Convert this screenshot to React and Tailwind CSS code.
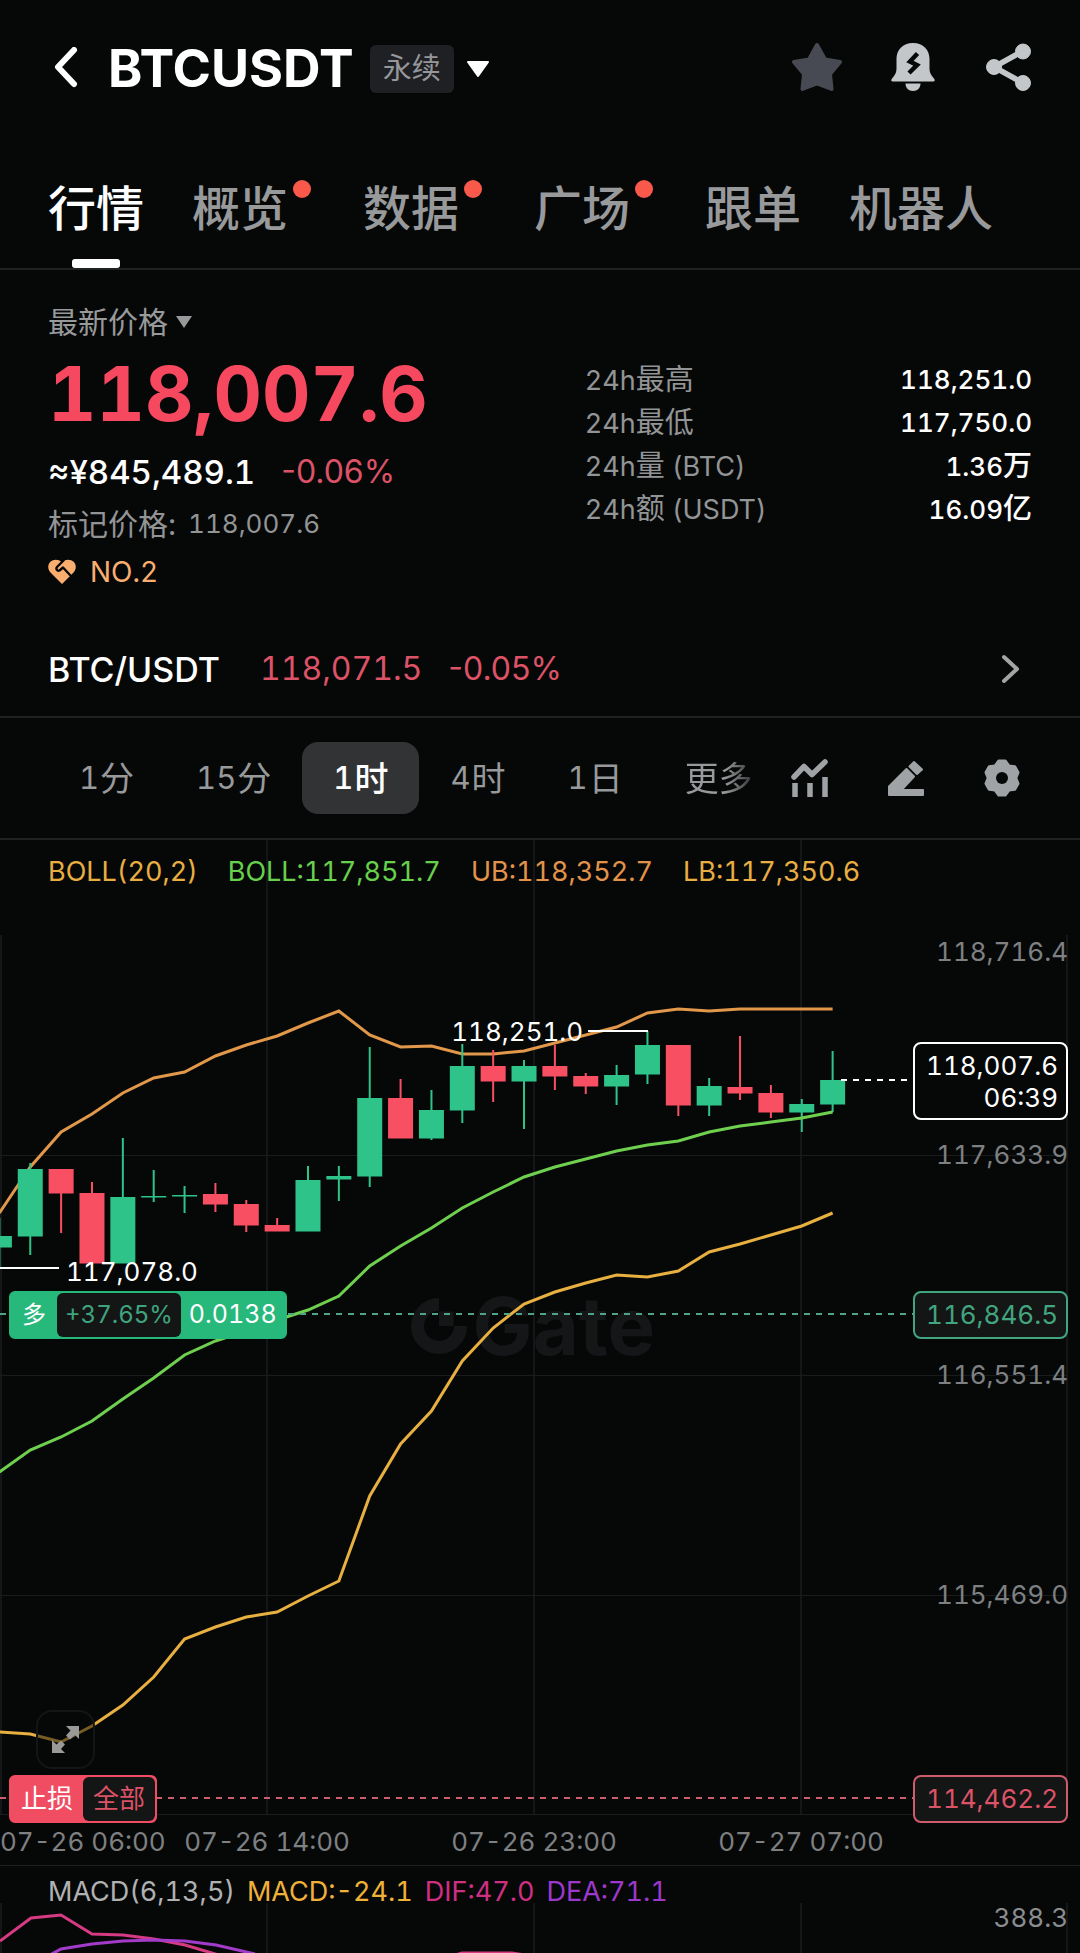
import React, { useState } from 'react';

const TABS = [
  { name: '行情' },
  { name: '概览', dot: true },
  { name: '数据', dot: true },
  { name: '广场', dot: true },
  { name: '跟单' },
  { name: '机器人' },
];

const STATS = [
  { en: '24h', zh: '最高', value: '118,251.0' },
  { en: '24h', zh: '最低', value: '117,750.0' },
  { en: '24h', zh: '量', unit: ' (BTC)', value: '1.36', valueZh: '万' },
  { en: '24h', zh: '额', unit: ' (USDT)', value: '16.09', valueZh: '亿' },
];

const PERIODS = [
  { num: '1', zh: '分' },
  { num: '15', zh: '分' },
  { num: '1', zh: '时' },
  { num: '4', zh: '时' },
  { num: '1', zh: '日' },
  { num: '', zh: '更多' },
];

// [up, high, bodyTop, bodyBottom, low] in chart units
const CANDLES = [
  [1, 378, 396, 407, 428],
  [1, 323, 329, 396, 415],
  [0, 329, 329, 353, 393],
  [0, 342, 353, 423, 423],
  [1, 298, 357, 423, 423],
  [1, 330, 356, 357, 362],
  [1, 346, 355, 356, 373],
  [0, 343, 354, 364, 372],
  [0, 360, 364, 385, 392],
  [0, 378, 385, 391, 391],
  [1, 326, 340, 391, 391],
  [1, 326, 336, 339, 361],
  [1, 207, 258, 336, 347],
  [0, 239, 258, 298, 298],
  [1, 250, 270, 298, 300],
  [1, 204, 226, 270, 283],
  [0, 210, 226, 241, 262],
  [1, 220, 226, 241, 289],
  [0, 205, 226, 236, 250],
  [0, 233, 236, 246, 254],
  [1, 225, 235, 246, 265],
  [1, 191, 205, 234, 244],
  [0, 205, 205, 265, 276],
  [1, 238, 246, 265, 276],
  [0, 196, 247, 253, 260],
  [0, 245, 253, 272, 278],
  [1, 259, 264, 272, 292],
  [1, 211, 240, 264, 272],
];

const UPPER = [373, 327, 292, 274, 253, 238, 232, 216, 205, 196, 183, 171, 195, 207, 206, 214, 214, 211, 203, 195, 187, 173, 169, 171, 169, 169, 169, 169];
const MIDDLE = [632, 610, 597, 581, 559, 538, 515, 501, 491, 480, 470, 456, 426, 406, 388, 368, 352, 337, 327, 319, 311, 305, 301, 292, 286, 282, 278, 272];
const LOWER = [892, 894, 902, 886, 865, 837, 799, 787, 777, 772, 756, 741, 656, 604, 571, 521, 488, 464, 452, 443, 435, 437, 431, 412, 404, 395, 386, 373];

const candleX = (i) => i * 30.86 - 0.6;
const toPoints = (values) => values.map((v, i) => `${candleX(i)},${v}`).join(' ');

const GRID_X = [1, 267, 534, 801, 1067];

const DATES = [
  { label: '07-26 14:00', x: 267 },
  { label: '07-26 23:00', x: 534 },
  { label: '07-27 07:00', x: 801 },
];

const Zh = ({ className = 'text-[29px]', children }) => <span className={className}>{children}</span>;

const Header = () => (
  <header className="flex h-[138px] items-center justify-between px-12">
    <div className="flex items-center">
      <button aria-label="返回" className="pl-1">
        <svg width="30" height="44" viewBox="0 0 30 44" fill="none" stroke="#fff" strokeWidth="6" strokeLinecap="round" strokeLinejoin="round">
          <path d="M22 3 6 20 22 37" />
        </svg>
      </button>
      <h1 className="ml-[26px] text-[52px] font-bold leading-[56px] text-white">BTCUSDT</h1>
      <span className="ml-4 rounded-md bg-[#1f2024] px-[13px] text-[29px] leading-[48px] text-[#96979a]">永续</span>
      <button aria-label="切换合约" className="ml-3">
        <svg width="24" height="18" viewBox="0 0 24 18" fill="#fff" stroke="#fff" strokeWidth="2" strokeLinejoin="round">
          <path d="M2 2h20L12 16z" />
        </svg>
      </button>
    </div>
    <div className="flex items-center gap-12 pb-1">
      <button aria-label="收藏">
        <svg width="50" height="50" viewBox="0 0 50 50" fill="#484a53" stroke="#484a53" strokeWidth="4" strokeLinejoin="round">
          <path d="M25 3 33 17.500 48 20 38 32 39.500 47 25 41.500 10.500 47 12 32 2 20 17 17.500z" />
        </svg>
      </button>
      <button aria-label="提醒">
        <svg width="46" height="50" viewBox="0 0 46 50">
          <path fill="#c4c7c9" d="M23 1C12.500 1 6.500 8 6.500 17v10c0 4-2 6.500-4.800 10-.9 1.300-.3 2.500 1 2.500h40.600c1.300 0 1.900-1.200 1-2.500-2.800-3.500-4.800-6-4.800-10V17C39.500 8 33.500 1 23 1z" />
          <path fill="#c4c7c9" d="M15.500 41.500h15c0 4.500-3 7.500-7.500 7.500s-7.500-3-7.500-7.500z" />
          <path fill="none" stroke="#060808" strokeWidth="4.500" d="M27.500 11.500 20 19.500 27 23 19 31" />
        </svg>
      </button>
      <button aria-label="分享">
        <svg width="48" height="50" viewBox="0 0 48 50" fill="#c4c7c9" stroke="#c4c7c9">
          <path d="M39 9 10 25 39 41" fill="none" strokeWidth="5.500" />
          <circle cx="39" cy="9.500" r="7.500" strokeWidth="1" />
          <circle cx="10" cy="25" r="7.500" strokeWidth="1" />
          <circle cx="39" cy="41" r="7.500" strokeWidth="1" />
        </svg>
      </button>
    </div>
  </header>
);

const Tabs = () => {
  const [active, setActive] = useState('行情');

  return (
    <nav className="flex gap-12 border-b-2 border-[#1f2122] px-12">
      {TABS.map((tab) => (
        <button key={tab.name} onClick={() => setActive(tab.name)} className="flex h-[130px] pt-[47px]">
          <span className="flex flex-col items-center">
            <span className={`text-[48px] font-medium leading-[48px] ${active === tab.name ? 'text-white' : 'text-[#98999b]'}`}>
              {tab.name}
            </span>
            {active === tab.name && <span className="mt-[26px] h-[9px] w-12 rounded-[3px] bg-white" />}
          </span>
          {tab.dot && <span className="-mt-[5px] ml-[5px] mr-1 h-[18px] w-[18px] rounded-full bg-[#f8594b]" />}
        </button>
      ))}
    </nav>
  );
};

const Ticker = () => (
  <section className="border-b-2 border-[#1f2122] px-12">
    <div className="grid grid-cols-[6fr_5fr]">
      <div>
        <button className="mt-8 flex items-center gap-2 text-[30px] leading-[40px] text-[#98999b]">
          最新价格
          <svg width="16" height="12" viewBox="0 0 16 12" fill="#98999b">
            <path d="M0 0h16L8 12z" />
          </svg>
        </button>
        <p className="mt-3 text-[75px] font-bold leading-[80px] text-[#f6495f]">118,007.6</p>
        <p className="mt-4 flex gap-[26px] text-[33px] font-medium leading-[44px] text-white">
          <span>≈¥845,489.1</span>
          <span className="text-[32px] font-normal normal-nums text-[#dc5266]">-0.06%</span>
        </p>
        <p className="mt-[10px] flex gap-3 text-[26px] leading-[40px] text-[#929496]">
          <Zh className="text-[30px]">标记价格:</Zh>
          <span>118,007.6</span>
        </p>
        <p className="mt-3 flex items-center gap-[14px] text-[28px] leading-[32px] text-[#f9ae70]">
          <svg width="28" height="26" viewBox="0 0 28 26">
            <path fill="#f9ae70" d="M14 25 2.500 13.500C-.6 10-.3 5.500 2.200 3 5.500-.2 10.500.2 14 3.200 17.500.2 22.500-.2 25.800 3c2.500 2.500 2.800 7-.3 10.500z" />
            <path fill="none" stroke="#060808" strokeWidth="2.400" strokeLinecap="round" strokeLinejoin="round" d="M15.500 1.500 9 8c-1.500 2 .3 4.500 2.500 3.500L15 8.500l7 7.500" />
          </svg>
          NO.2
        </p>
      </div>
      <dl className="pt-[88px] text-[26px] leading-[43px]">
        {STATS.map((row) => (
          <div key={row.zh} className="flex h-[43px] justify-between">
            <dt className="text-[27px] text-[#929496]">
              {row.en}
              <Zh>{row.zh}</Zh>
              {row.unit}
            </dt>
            <dd className="font-medium text-white">
              {row.value}
              {row.valueZh && <Zh>{row.valueZh}</Zh>}
            </dd>
          </div>
        ))}
      </dl>
    </div>
    <a href="#spot" className="mt-[34px] flex h-[94px] items-center text-[32px]">
      <span className="text-[34px] font-medium text-white">BTC/USDT</span>
      <span className="ml-10 text-[#dc5266]">118,071.5</span>
      <span className="ml-[26px] normal-nums text-[#dc5266]">-0.05%</span>
      <svg className="ml-auto mr-2" width="24" height="32" viewBox="0 0 24 32" fill="none" stroke="#a3a4a5" strokeWidth="4" strokeLinecap="round" strokeLinejoin="round">
        <path d="M4 4 17 16 4 28" />
      </svg>
    </a>
  </section>
);

const Toolbar = () => {
  const [period, setPeriod] = useState(2);

  return (
    <div className="flex h-[122px] items-center border-b-2 border-[#1f2122] pl-12 pr-[58px]">
      <div className="flex flex-1 overflow-hidden">
        {PERIODS.map((p, i) => (
          <button
            key={p.num + p.zh}
            onClick={() => setPeriod(i)}
            className={`flex h-[72px] shrink-0 items-center gap-px rounded-2xl px-[31px] text-[31px] ${
              period === i ? 'bg-[#323335] font-medium text-white' : 'text-[#98999b]'
            } ${i === 5 ? 'bg-gradient-to-r from-[#98999b] from-55% to-[#3a3b3c] to-75% bg-clip-text text-transparent' : ''}`}
          >
            {p.num}
            <Zh className="text-[34px]">{p.zh}</Zh>
          </button>
        ))}
      </div>
      <div className="flex shrink-0 gap-14">
        <button aria-label="指标">
          <svg width="40" height="40" viewBox="0 0 40 40" fill="none" stroke="#a0a3a6" strokeLinecap="round" strokeLinejoin="round">
            <path strokeWidth="5.500" d="M4 19 14 8.500 22 16.500 35 4" />
            <path strokeWidth="5.500" strokeLinecap="butt" d="M5 25v14M20 25v14M35 19v20" />
          </svg>
        </button>
        <button aria-label="画线">
          <svg width="40" height="40" viewBox="0 0 40 40" fill="#a0a3a6" stroke="#a0a3a6" strokeWidth="2" strokeLinejoin="round">
            <path d="M3 37V28.500L20.500 11 28 18.500 15.500 32H37v5z" />
            <path d="M23.500 8.500 28 4 36 11.500 31 16z" />
          </svg>
        </button>
        <button aria-label="设置">
          <svg width="40" height="40" viewBox="0 0 40 40">
            <path
              fill="#a0a3a6"
              stroke="#a0a3a6"
              strokeWidth="3"
              strokeLinejoin="round"
              d="M16.800 3h6.400l3.700 5 5.900.8 3.200 5.700-2.200 5.500 2.200 5.500-3.200 5.700-5.900.8-3.700 5h-6.400l-3.700-5-5.900-.8L4 25.500 6.200 20 4 14.500l3.200-5.700 5.900-.8z"
            />
            <circle cx="20" cy="20" r="6" fill="#060808" />
          </svg>
        </button>
      </div>
    </div>
  );
};

const Watermark = () => (
  <div className="absolute left-[38%] top-[448px] flex items-center gap-1 text-[#141617]">
    <svg width="58" height="58" viewBox="0 0 58 58">
      <path fill="none" stroke="currentColor" strokeWidth="13" d="M29 7.500A21.500 21.500 0 1 0 50.500 29" />
      <path fill="currentColor" d="M29 14.500h14.500V29H29z" />
    </svg>
    <span className="text-[80px] font-bold leading-[76px]">Gate</span>
  </div>
);

const PriceChart = () => (
  <section className="relative h-[975px]">
    <Watermark />
    <svg className="absolute inset-0 h-full w-full" viewBox="0 0 1080 975" preserveAspectRatio="none" fill="none">
      <g stroke="#141617" strokeWidth="2">
        {GRID_X.map((x, i) => (
          <path key={x} d={`M${x} ${i === 0 || i === 4 ? 95 : 0}V975`} />
        ))}
        <path d="M0 315.500H1067M0 535.500H1067M0 755.500H1067M0 974.500H1067" stroke="#191b1c" strokeWidth="1" />
      </g>
      <polyline points={toPoints(UPPER)} stroke="#e2984a" strokeWidth="3" />
      {CANDLES.map(([up, high, top, bottom, low], i) => (
        <g key={i} fill={up ? '#2dc389' : '#f84f63'}>
          <rect x={candleX(i) - 1} y={high} width="2" height={low - high} />
          <rect x={candleX(i) - 12.5} y={top} width="25" height={bottom - top + 0.5} />
        </g>
      ))}
      <polyline points={toPoints(MIDDLE)} stroke="#6fd04f" strokeWidth="3" />
      <polyline points={toPoints(LOWER)} stroke="#e8b040" strokeWidth="3" />
      <path d="M588 191H648M0 428H59" stroke="#fff" strokeWidth="2" />
      <path d="M841 240H914" stroke="#fff" strokeWidth="2" strokeDasharray="6 6" />
      <path d="M0 474H914" stroke="#4fa487" strokeWidth="2" strokeDasharray="6 6" />
      <path d="M0 958H914" stroke="#cf5c6c" strokeWidth="2" strokeDasharray="6 6" />
    </svg>

    <div className="relative flex gap-[30px] px-12 pt-3 text-[27px] leading-[40px]">
      <span className="text-[#e9ae42]">BOLL(20,2)</span>
      <span className="text-[#67d04c]">BOLL:117,851.7</span>
      <span className="text-[#e3924a]">UB:118,352.7</span>
      <span className="text-[#e9ae42]">LB:117,350.6</span>
    </div>

    <div className="text-[26px] leading-[32px]">
      <div className="text-[#7e8082]">
        <span className="absolute right-3 top-[96px]">118,716.4</span>
        <span className="absolute right-3 top-[299px]">117,633.9</span>
        <span className="absolute right-3 top-[519px]">116,551.4</span>
        <span className="absolute right-3 top-[739px]">115,469.0</span>
      </div>
      <div className="text-white">
        <span className="absolute right-[46%] top-[176px]">118,251.0</span>
        <span className="absolute left-[66px] top-[416px]">117,078.0</span>
      </div>

      <div className="absolute right-3 top-[202px] rounded-lg border-2 border-white bg-[#060808] pb-1 pl-[11px] pr-2 pt-[6px] text-right text-white">
        <p>118,007.6</p>
        <p>06:39</p>
      </div>
      <div className="absolute right-3 top-[451px] rounded-lg border-2 border-[#41a67f] bg-[#141515] py-[6px] pl-[11px] pr-2 text-[#41a67f]">
        116,846.5
      </div>
    </div>

    <div className="absolute left-[9px] top-[451px] flex h-12 items-center rounded-md border-2 border-[#27b87c] bg-[#27b87c] text-[24px] text-white">
      <span className="px-[11px]">多</span>
      <span className="flex h-full items-center rounded-md bg-[#141515] px-2 text-[#3fa47e]">+37.65%</span>
      <span className="px-2 text-[25px]">0.0138</span>
    </div>
    <button aria-label="全屏" className="absolute left-9 top-[870px] flex h-[59px] w-[59px] items-center justify-center rounded-2xl border-2 border-[#131516] bg-[#060808]/50">
      <svg width="30" height="30" viewBox="0 0 30 30" fill="#9a9a98">
        <path d="M15 1h13v13l-4-4-5 4.500-4-4L19.500 5.500zM1 28V15l4.500 4.500 4.500-4 4 4-4 4.500 4 4z" />
      </svg>
    </button>
  </section>
);

const StopLoss = () => (
  <>
    <div className="absolute -top-10 left-[9px] flex h-12 items-center rounded-md border-2 border-[#f04d62] bg-[#f04d62] text-[26px] text-white">
      <span className="px-[10px]">止损</span>
      <span className="flex h-full items-center rounded-md bg-[#141515] px-[10px] text-[#dc5266]">全部</span>
    </div>
    <div className="absolute -top-10 right-3 rounded-lg border-2 border-[#cf5c6c] bg-[#141515] py-[6px] pl-[11px] pr-2 leading-[32px] text-[#dc5266]">
      114,462.2
    </div>
  </>
);

const TimeAxis = () => (
  <div className="relative h-[50px] text-[26px] leading-[54px] text-[#7e8082]">
    <StopLoss />
    <span>07-26 06:00</span>
    {DATES.map((d) => (
      <span key={d.label} className="absolute top-0 -translate-x-1/2 whitespace-nowrap" style={{ left: `${(d.x / 1080) * 100}%` }}>
        {d.label}
      </span>
    ))}
  </div>
);

const MacdPanel = () => (
  <section className="relative h-[88px] overflow-hidden border-t border-[#1d1f20]">
    <svg className="absolute inset-0 h-full w-full" viewBox="0 0 1080 87" preserveAspectRatio="none" fill="none">
      {GRID_X.map((x) => (
        <path key={x} d={`M${x} 37V87`} stroke="#141617" strokeWidth="2" />
      ))}
      <path d="M0 75 31 52 61 49 92 68 123 69 154 73 185 79 222 90M455 89l7-2h50l13 2" stroke="#d63a82" strokeWidth="3" />
      <path d="M48 90 61 83 92 78 123 75 154 74 185 75 216 79 255 88" stroke="#a23cc8" strokeWidth="3" />
    </svg>
    <div className="relative flex gap-3 px-12 pt-[6px] text-[27px] leading-[40px]">
      <span className="text-[#b0b1b2]">MACD(6,13,5)</span>
      <span className="text-[#f0b138]">MACD:-24.1</span>
      <span className="text-[#cf2f80]">DIF:47.0</span>
      <span className="text-[#9d38cc]">DEA:71.1</span>
    </div>
    <span className="absolute right-3 top-9 text-[26px] leading-[32px] text-[#8b8d8f]">388.3</span>
  </section>
);

const App = () => {
  return (
    <div className="min-h-screen bg-[#060808] font-['Inter','Noto_Sans_CJK_SC',sans-serif] tabular-nums">
      <Header />
      <Tabs />
      <Ticker />
      <Toolbar />
      <PriceChart />
      <TimeAxis />
      <MacdPanel />
    </div>
  );
};

export default App;
